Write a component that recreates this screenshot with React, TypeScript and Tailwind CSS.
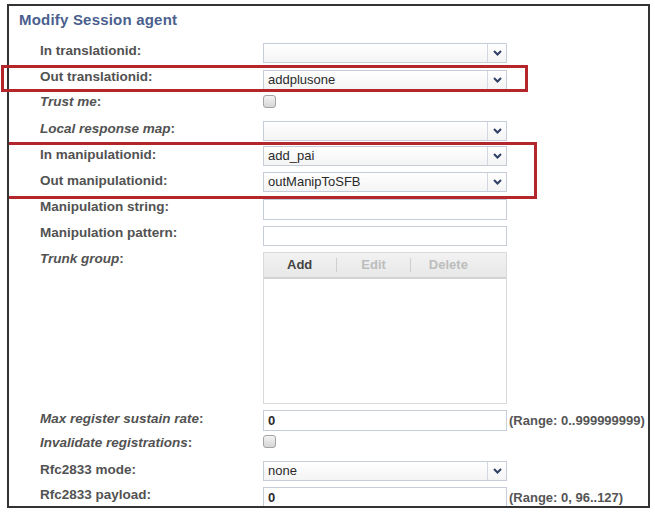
import React from "react";

const FONT = { fontFamily: '"Liberation Sans", Arial, sans-serif' };

function Chevron() {
  return (
    <svg width="9" height="6" viewBox="0 0 9 6">
      <path d="M1 1 L4.5 4.5 L8 1" fill="none" stroke="#2f3f66" strokeWidth="2" />
    </svg>
  );
}

function Select({ value = "" }: { value?: string }) {
  return (
    <div className="flex h-[20px] w-[244px] border border-[#c7ccd9] bg-gradient-to-b from-white to-[#f4f4f4]">
      <div className="flex-1 pl-[4px] text-[13px] leading-[18px] text-[#2a2a2a]">{value}</div>
      <div className="flex w-[19px] items-center justify-center border-l border-[#d3d7e2]">
        <Chevron />
      </div>
    </div>
  );
}

function Input({ value = "", h = 21 }: { value?: string; h?: number }) {
  return (
    <div
      className="w-[244px] border border-[#c7ccd9] bg-white pl-[4px] text-[13px] font-bold text-[#2a2a2a]"
      style={{ height: h, lineHeight: `${h - 2}px` }}
    >
      {value}
    </div>
  );
}

function Checkbox() {
  return (
    <div className="h-[13px] w-[13px] rounded-[3px] border border-[#a3a3a3] bg-gradient-to-b from-[#f3f3f3] to-[#d6d6d6]" />
  );
}

function Label({ text, italic, offset }: { text: string; italic?: boolean; offset: number }) {
  return (
    <div
      className="w-[223px] shrink-0 text-[13.5px] font-bold leading-[15px] text-[#525252]"
      style={{ marginTop: offset }}
    >
      {italic ? <span className="italic">{text}</span> : text}:
    </div>
  );
}

function Row({
  h,
  label,
  italic,
  offset,
  children,
}: {
  h: number;
  label: string;
  italic?: boolean;
  offset: number;
  children: React.ReactNode;
}) {
  return (
    <div className="flex shrink-0 items-start pl-[31px]" style={{ height: h }}>
      <Label text={label} italic={italic} offset={offset} />
      {children}
    </div>
  );
}

function Range({ text }: { text: string }) {
  return <div className="ml-[2px] text-[13px] font-bold leading-[21px] text-[#555]">{text}</div>;
}

export default function App() {
  return (
    <div className="relative h-[513px] w-[655px] overflow-hidden bg-white" style={FONT}>
      <div className="ml-[7px] mt-[4px] flex h-[504px] w-[643px] flex-col overflow-hidden border-2 border-[#333]">
        <div className="h-[37px] shrink-0 pl-[10px] pt-[5px] text-[15px] font-bold leading-[18px] tracking-[0.2px] text-[#4b5f8e]">
          Modify Session agent
        </div>
        <Row h={27} label="In translationid" offset={0}>
          <Select />
        </Row>
        <Row h={25} label="Out translationid" offset={-1}>
          <Select value="addplusone" />
        </Row>
        <Row h={26} label="Trust me" italic offset={-1}>
          <Checkbox />
        </Row>
        <Row h={25} label="Local response map" italic offset={0}>
          <Select />
        </Row>
        <Row h={26} label="In manipulationid" offset={1}>
          <Select value="add_pai" />
        </Row>
        <Row h={27} label="Out manipulationid" offset={1}>
          <Select value="outManipToSFB" />
        </Row>
        <Row h={27} label="Manipulation string" offset={0}>
          <Input />
        </Row>
        <Row h={26} label="Manipulation pattern" offset={-1}>
          <Input h={20} />
        </Row>
        <Row h={158} label="Trunk group" italic offset={-1}>
          <div className="flex h-[152px] w-[244px] flex-col border border-[#d9d9d9]">
            <div className="flex h-[26px] shrink-0 items-center border-b-2 border-[#d2d2d2] bg-gradient-to-b from-[#f2f2f2] to-[#e8e8e8] text-[13px] font-bold">
              <span className="ml-[23px] text-[#444]">Add</span>
              <span className="ml-[24px] h-[14px] w-px bg-[#cfcfcf]" />
              <span className="ml-[24px] text-[#bdbdbd]">Edit</span>
              <span className="ml-[24px] h-[14px] w-px bg-[#cfcfcf]" />
              <span className="ml-[18px] text-[#bdbdbd]">Delete</span>
            </div>
            <div className="flex-1 bg-white" />
          </div>
        </Row>
        <Row h={25} label="Max register sustain rate" italic offset={1}>
          <Input value="0" />
          <Range text="(Range: 0..999999999)" />
        </Row>
        <Row h={26} label="Invalidate registrations" italic offset={0}>
          <Checkbox />
        </Row>
        <Row h={26} label="Rfc2833 mode" offset={1}>
          <Select value="none" />
        </Row>
        <Row h={26} label="Rfc2833 payload" offset={0}>
          <Input value="0" />
          <Range text="(Range: 0, 96..127)" />
        </Row>
      </div>
      <div className="absolute left-[1px] top-[65px] h-[27px] w-[527px] border-[3px] border-[#b3262b]" />
      <div className="absolute left-[9px] top-[142px] h-[57px] w-[528px] border-[3px] border-l-0 border-[#b3262b]" />
    </div>
  );
}
